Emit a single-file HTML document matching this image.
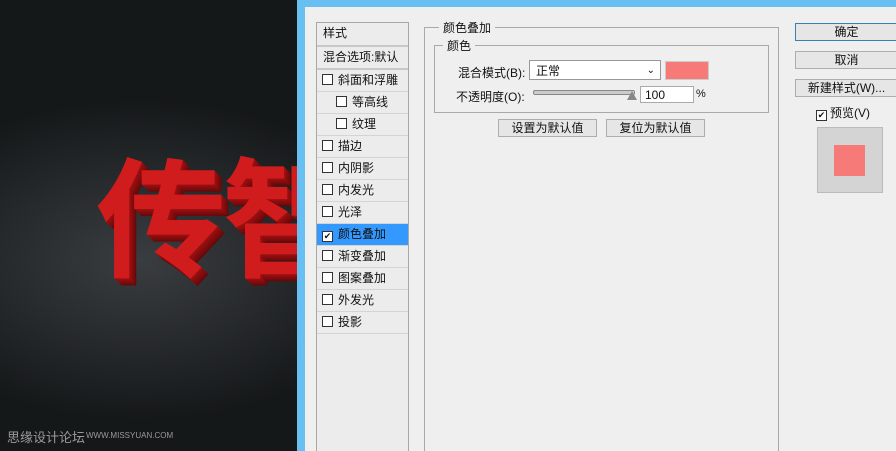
<!DOCTYPE html>
<html style="overflow:hidden"><head><meta charset="utf-8"><style>
html,body{margin:0;width:896px;height:451px;overflow:hidden}
body{position:relative;font-family:"Liberation Sans","Noto Sans CJK SC",sans-serif;font-size:12px;color:#111;background:#efefef}
.left{position:absolute;left:0;top:0;width:297px;height:451px;background:radial-gradient(ellipse 260px 160px at 140px 260px,#3a3d40 0%,#26292b 55%,#151819 100%);overflow:hidden}
.big{position:absolute;left:96px;top:146px;white-space:nowrap;font-size:130px;font-weight:bold;color:#d11c1e;letter-spacing:-4px;line-height:1;font-family:"Noto Sans CJK SC",sans-serif;
text-shadow:1px 1px #9a0f10,2px 2px #930e0f,3px 3px #8a0d0e,4px 4px #820c0d,5px 5px #7a0b0c,6px 6px #700a0b,7px 7px #650909}
.wm{position:absolute;left:7px;top:427px;color:#9a9a9a;font-size:13px}
.wm2{position:absolute;left:86px;top:431px;color:#9a9a9a;font-size:8px}
.blueV{position:absolute;left:297px;top:0;width:8px;height:451px;background:#68bff2}
.blueH{position:absolute;left:297px;top:0;width:599px;height:7px;background:#68bff2}
.list{position:absolute;left:316px;top:22px;width:91px;height:440px;border:1px solid #a8a8a8;background:#ececec}
.it{position:absolute;left:0;width:91px;height:21px;border-bottom:1px solid #d4d4d4;line-height:21px;font-size:12px}
.cb{display:inline-block;width:9px;height:9px;border:1px solid #333;background:#fff;vertical-align:-1px;margin-right:5px}
.sel{background:#3399ff}
fieldset{position:absolute;border:1px solid #a9a9a9;margin:0;padding:0}
legend{padding:0 4px;margin-left:14px;font-size:12px}
.btn{position:absolute;border:1px solid #adadad;background:#e6e6e6;text-align:center;line-height:16px;font-size:12px}
</style></head><body>
<div class="left">
<div class="big">传智</div>
<div class="wm">思缘设计论坛</div><div class="wm2">WWW.MISSYUAN.COM</div>
</div>
<div class="blueV"></div><div class="blueH"></div>
<div class="list">
<div class="it" style="top:0;height:22px;padding-left:6px;width:85px;border-bottom:2px solid #c8c8c8">样式</div>
<div class="it" style="top:24px;padding-left:6px;width:85px;border-bottom:2px solid #c8c8c8">混合选项:默认</div>
<div class="it" style="top:47px;padding-left:5px;width:86px"><span class="cb"></span>斜面和浮雕</div>
<div class="it" style="top:69px;padding-left:19px;width:72px"><span class="cb"></span>等高线</div>
<div class="it" style="top:91px;padding-left:19px;width:72px"><span class="cb"></span>纹理</div>
<div class="it" style="top:113px;padding-left:5px;width:86px"><span class="cb"></span>描边</div>
<div class="it" style="top:135px;padding-left:5px;width:86px"><span class="cb"></span>内阴影</div>
<div class="it" style="top:157px;padding-left:5px;width:86px"><span class="cb"></span>内发光</div>
<div class="it" style="top:179px;padding-left:5px;width:86px"><span class="cb"></span>光泽</div>
<div class="it sel" style="top:201px;padding-left:5px;width:86px"><span class="cb" style="text-align:center;font-size:9px;line-height:9px">✔</span>颜色叠加</div>
<div class="it" style="top:223px;padding-left:5px;width:86px"><span class="cb"></span>渐变叠加</div>
<div class="it" style="top:245px;padding-left:5px;width:86px"><span class="cb"></span>图案叠加</div>
<div class="it" style="top:267px;padding-left:5px;width:86px"><span class="cb"></span>外发光</div>
<div class="it" style="top:289px;padding-left:5px;width:86px"><span class="cb"></span>投影</div>
</div>
<fieldset style="left:424px;top:19px;width:353px;height:450px"><legend>颜色叠加</legend></fieldset>
<fieldset style="left:434px;top:37px;width:333px;height:74px"><legend style="margin-left:8px">颜色</legend></fieldset>
<div style="position:absolute;left:458px;top:64px">混合模式(B):</div>
<div style="position:absolute;left:529px;top:60px;height:20px;border:1px solid #999;background:#fff;line-height:20px;padding-left:6px;box-sizing:border-box;width:132px">正常<span style="position:absolute;right:5px;top:0;font-size:10px">⌄</span></div>
<div style="position:absolute;left:665px;top:61px;width:42px;height:17px;background:#f67b78;border:1px solid #ccc"></div>
<div style="position:absolute;left:456px;top:88px">不透明度(O):</div>
<div style="position:absolute;left:533px;top:90px;width:100px;height:3px;border:1px solid #888;border-radius:2px;background:#ccc"></div>
<div style="position:absolute;left:627px;top:91px;width:0;height:0;border-left:5px solid transparent;border-right:5px solid transparent;border-bottom:9px solid #888"></div>
<div style="position:absolute;left:640px;top:86px;height:17px;border:1px solid #aaa;background:#fff;line-height:17px;padding-left:4px;box-sizing:border-box;width:54px">100</div>
<div style="position:absolute;left:696px;top:88px;font-size:11px">%</div>
<div class="btn" style="left:498px;top:119px;width:97px">设置为默认值</div>
<div class="btn" style="left:606px;top:119px;width:97px">复位为默认值</div>
<div class="btn" style="left:795px;top:23px;width:101px;border-color:#3c7fb1">确定</div>
<div class="btn" style="left:795px;top:51px;width:101px">取消</div>
<div class="btn" style="left:795px;top:79px;width:101px">新建样式(W)...</div>
<div style="position:absolute;left:816px;top:104px"><span class="cb" style="text-align:center;font-size:9px;line-height:9px;margin-right:3px">✔</span>预览(V)</div>
<div style="position:absolute;left:817px;top:127px;width:64px;height:64px;background:#d4d4d4;border:1px solid #bbb"></div>
<div style="position:absolute;left:834px;top:145px;width:31px;height:31px;background:#f67b78"></div>
</body></html>
